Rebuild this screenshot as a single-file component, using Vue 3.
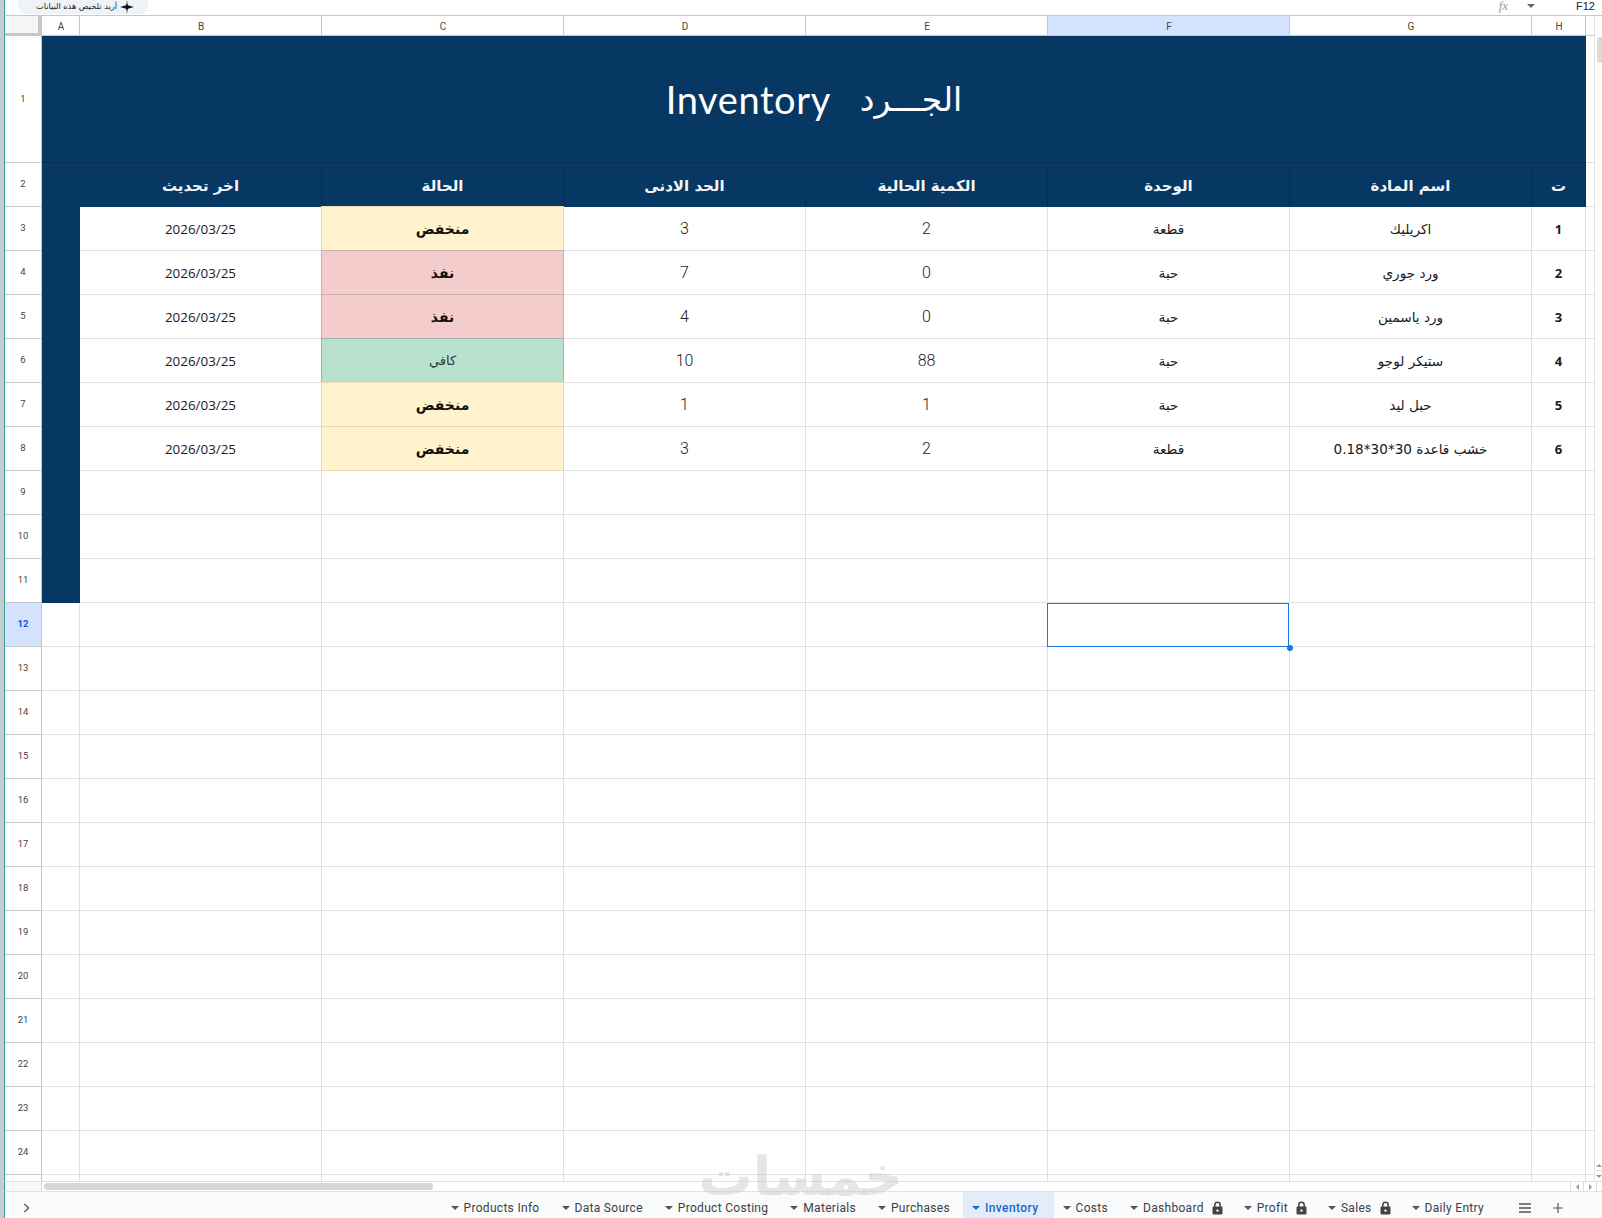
<script setup>
const colLetters = ['A', 'B', 'C', 'D', 'E', 'F', 'G', 'H']
const headers = ['اخر تحديث', 'الحالة', 'الحد الادنى', 'الكمية الحالية', 'الوحدة', 'اسم المادة', 'ت']
const items = [
  { date: '2026/03/25', status: 'منخفض', cls: 'low', min: 3, qty: 2, unit: 'قطعة', name: 'اكريليك', n: 1 },
  { date: '2026/03/25', status: 'نفذ', cls: 'out', min: 7, qty: 0, unit: 'حبة', name: 'ورد جوري', n: 2 },
  { date: '2026/03/25', status: 'نفذ', cls: 'out', min: 4, qty: 0, unit: 'حبة', name: 'ورد ياسمين', n: 3 },
  { date: '2026/03/25', status: 'كافي', cls: 'ok', min: 10, qty: 88, unit: 'حبة', name: 'ستيكر لوجو', n: 4 },
  { date: '2026/03/25', status: 'منخفض', cls: 'low', min: 1, qty: 1, unit: 'حبة', name: 'حبل ليد', n: 5 },
  { date: '2026/03/25', status: 'منخفض', cls: 'low', min: 3, qty: 2, unit: 'قطعة', name: 'خشب قاعدة 30*30*0.18', n: 6 }
]
const emptyRows = Array.from({ length: 16 }, (_, i) => i + 9)
const tabs = [
  { name: 'Products Info' },
  { name: 'Data Source' },
  { name: 'Product Costing' },
  { name: 'Materials' },
  { name: 'Purchases' },
  { name: 'Inventory', active: true },
  { name: 'Costs' },
  { name: 'Dashboard', lock: true },
  { name: 'Profit', lock: true },
  { name: 'Sales', lock: true },
  { name: 'Daily Entry' }
]
</script>

<template>
  <div class="page">
    <header class="topbar">
      <div class="pill">
        <span class="pill-text" dir="rtl">أريد تلخيص هذه البيانات</span>
        <svg class="sparkle" viewBox="0 0 20 20" width="14" height="14">
          <path d="M10 0 L10.7 6.2 L12.2 7.8 L20 10 L12.2 12.2 L10.7 13.8 L10 20 L9.3 13.8 L7.8 12.2 L0 10 L7.8 7.8 L9.3 6.2 Z" fill="#111" />
        </svg>
      </div>
      <div class="fx-area">
        <span class="fx">fx</span>
        <span class="fx-caret"></span>
        <span class="cell-name">F12</span>
      </div>
    </header>

    <div class="sheet">
      <div class="corner"></div>
      <div
        v-for="c in colLetters"
        :key="c"
        class="col-head"
        :class="{ selected: c === 'F' }"
      >{{ c }}</div>
      <div class="col-head blank"></div>

      <div class="row-head">1</div>
      <div class="title">
        <span class="title-en">Inventory</span>
        <span class="title-ar">الجـــرد</span>
      </div>
      <div class="cell edge"></div>

      <div class="row-head">2</div>
      <div class="head-cell fill"></div>
      <div v-for="h in headers" :key="h" class="head-cell" dir="rtl">{{ h }}</div>
      <div class="cell edge"></div>

      <template v-for="(it, i) in items" :key="it.n">
        <div class="row-head">{{ i + 3 }}</div>
        <div class="cell fill"></div>
        <div class="cell date">{{ it.date }}</div>
        <div class="cell status" :class="it.cls" dir="rtl">{{ it.status }}</div>
        <div class="cell num">{{ it.min }}</div>
        <div class="cell num">{{ it.qty }}</div>
        <div class="cell ar" dir="rtl">{{ it.unit }}</div>
        <div class="cell ar" dir="rtl">{{ it.name }}</div>
        <div class="cell idx">{{ it.n }}</div>
        <div class="cell edge"></div>
      </template>

      <template v-for="r in emptyRows" :key="r">
        <div class="row-head" :class="{ selected: r === 12 }">{{ r }}</div>
        <div class="cell" :class="{ fill: r < 12 }"></div>
        <div class="cell"></div>
        <div class="cell"></div>
        <div class="cell"></div>
        <div class="cell"></div>
        <div class="cell" :class="{ active: r === 12 }">
          <span v-if="r === 12" class="handle"></span>
        </div>
        <div class="cell"></div>
        <div class="cell"></div>
        <div class="cell edge"></div>
      </template>

      <div class="row-head stub"></div>
      <div v-for="c in 9" :key="c" class="cell stub-cell"></div>
    </div>

    <div class="hscroll">
      <div class="hscroll-left"></div>
      <div class="hscroll-track">
        <div class="hthumb"></div>
      </div>
      <div class="hbtn"><span class="tri-left"></span></div>
      <div class="hbtn"><span class="tri-right"></span></div>
      <div class="hscroll-end"></div>
    </div>

    <footer class="tabbar">
      <svg class="chevron" viewBox="0 0 8 12" width="7" height="10">
        <path d="M1.5 1 L6.5 6 L1.5 11" fill="none" stroke="#444" stroke-width="1.4" />
      </svg>
      <div class="tabs">
        <div v-for="t in tabs" :key="t.name" class="tab" :class="{ on: t.active, locked: t.lock }">
          <span class="caret"></span>
          <span class="tab-name">{{ t.name }}</span>
          <svg v-if="t.lock" class="lock" viewBox="0 0 11 14" width="11" height="14">
            <path d="M2.8 6 V4 a2.7 2.7 0 0 1 5.4 0 V6" fill="none" stroke="#444" stroke-width="1.5" />
            <rect x="0.5" y="5.6" width="10" height="8" rx="1" fill="#444" />
            <circle cx="5.5" cy="9.6" r="1.2" fill="#f9fbfd" />
          </svg>
        </div>
      </div>
      <div class="tools">
        <svg viewBox="0 0 12 10" width="12" height="10">
          <path d="M0 1 H12 M0 5 H12 M0 9 H12" stroke="#555" stroke-width="1.3" />
        </svg>
        <svg viewBox="0 0 10 10" width="10" height="10">
          <path d="M5 0 V10 M0 5 H10" stroke="#555" stroke-width="1.2" />
        </svg>
      </div>
    </footer>

    <div class="vscroll-thumb"></div>
    <div class="vbtns">
      <div class="vbtn"><span class="tri-up"></span></div>
      <div class="vbtn"><span class="tri-down"></span></div>
    </div>
    <div class="watermark" dir="rtl">خمسات</div>
  </div>
</template>

<style scoped>
.page {
  position: relative;
  width: 1602px;
  height: 1218px;
  overflow: hidden;
  box-sizing: border-box;
  border-left: 4px solid #c9cccc;
  display: flex;
  flex-direction: column;
  background: #fff;
  font-family: Roboto, "DejaVu Sans", sans-serif;
  color: #222;
}
.topbar {
  height: 16px;
  flex: none;
  display: flex;
  justify-content: space-between;
  border-left: 1px solid #3aa0a8;
  box-sizing: border-box;
  padding-left: 13px;
}
.pill {
  width: 130px;
  height: 15px;
  margin-top: -1px;
  box-sizing: border-box;
  padding: 0 20px 0 18px;
  border-radius: 0 0 9px 9px;
  background: #eff3f8;
  display: flex;
  align-items: center;
  justify-content: space-between;
  gap: 3px;
}
.pill-text {
  font: 8.2px "DejaVu Sans", sans-serif;
  white-space: nowrap;
  color: #222;
  margin-top: -1px;
}
.sparkle { flex: none; }
.fx-area {
  display: flex;
  align-items: center;
  padding-right: 7px;
  height: 12px;
}
.fx {
  font: italic 13px/12px "Liberation Serif", serif;
  color: #999;
  margin-right: 19px;
}
.fx-caret {
  width: 0;
  height: 0;
  border-left: 4px solid transparent;
  border-right: 4px solid transparent;
  border-top: 4px solid #666;
  margin-right: 41px;
}
.cell-name {
  font: 11px/12px "Liberation Sans", sans-serif;
  color: #222;
}
.sheet {
  flex: none;
  display: grid;
  grid-template-columns: 37px 38px repeat(6, 242px) 54px 9px;
  grid-template-rows: 20px 127px repeat(23, 44px) 6px;
  border-left: 1px solid #3aa0a8;
  border-top: 1px solid #c7c7c7;
  margin-top: -1px;
}
.corner {
  background: #f5f5f5;
  border-right: 4px solid #c7c7c7;
  border-bottom: 3px solid #c7c7c7;
}
.col-head {
  box-sizing: border-box;
  display: flex;
  align-items: center;
  justify-content: center;
  padding: 1px 0 0 1px;
  font: 10px Roboto, sans-serif;
  color: #444;
  border-right: 1px solid #c7c7c7;
  border-bottom: 1px solid #c7c7c7;
}
.col-head.selected { background: #d3e3fd; }
.col-head.blank { border-right: 1px solid #e1e1e1; }
.row-head {
  box-sizing: border-box;
  display: flex;
  align-items: center;
  justify-content: center;
  padding-bottom: 2px;
  font: 9.5px Roboto, sans-serif;
  color: #444;
  border-right: 1px solid #c7c7c7;
  border-bottom: 1px solid #c7c7c7;
}
.row-head.selected {
  background: #d3e3fd;
  font-weight: 700;
  color: #0b57d0;
}
.row-head.stub { border-bottom: 0; }
.title {
  grid-column: span 8;
  background: #073763;
  color: #fff;
  display: flex;
  align-items: center;
  justify-content: center;
  gap: 29px;
  border-bottom: 1px solid #06304f;
  box-sizing: border-box;
}
.title-en {
  font: 400 38px Lato, sans-serif;
  letter-spacing: .6px;
}
.title-ar {
  font: 400 33px "DejaVu Sans", sans-serif;
}
.head-cell {
  box-sizing: border-box;
  background: #073763;
  color: #f2f5f8;
  display: flex;
  align-items: center;
  justify-content: center;
  padding-top: 1px;
  font: 700 15px "DejaVu Sans", sans-serif;
  border-right: 1px solid #06304f;
}
.cell {
  box-sizing: border-box;
  display: flex;
  align-items: center;
  justify-content: center;
  min-width: 0;
  border-right: 1px solid #e1e1e1;
  border-bottom: 1px solid #e1e1e1;
  position: relative;
  color: #1a1a1a;
}
.cell.fill { background: #073763; border-color: #073763; }
.head-cell.fill { border-color: #073763; }
.cell.edge { border-right-color: #e1e1e1; }
.cell.stub-cell { border-bottom: 0; }
.date { font: 13.4px "Open Sans", sans-serif; }
.num { font: 300 16px Roboto, sans-serif; color: #222; }
.ar { font: 13.6px "DejaVu Sans", sans-serif; }
.idx { font: 700 13px "Open Sans", sans-serif; }
.status {
  font: 700 14px "DejaVu Sans", sans-serif;
  color: #111;
  margin: -1px 0 0 -1px;
  border: 1px solid;
}
.status.low { background: #fff2cc; border-color: #e8dbb4; }
.status.out { background: #f4cccc; border-color: #ceadad; }
.status.ok {
  background: #b7e1cd;
  border-color: #9cb8aa;
  font-weight: 400;
  font-size: 13px;
  color: #2c3e38;
}
.cell.active {
  border: 0;
  outline: 1.5px solid #1a73e8;
  outline-offset: -1.5px;
  margin: 0 1px 0 -1px;
  z-index: 2;
  overflow: visible;
}
.handle {
  position: absolute;
  right: -4px;
  bottom: -4px;
  width: 6px;
  height: 6px;
  border-radius: 50%;
  background: #1a73e8;
}
.hscroll {
  flex: none;
  height: 10px;
  display: flex;
  border-top: 1px solid #e1e1e1;
  box-sizing: border-box;
  border-left: 1px solid #3aa0a8;
}
.hscroll-left {
  width: 36px;
  flex: none;
  background: #f8f8f8;
  border-right: 1px solid #d5d5d5;
}
.hscroll-track {
  flex: 1;
  padding: 1px 0 0 2px;
}
.hthumb {
  width: 389px;
  height: 7px;
  border-radius: 4px;
  background: #d6d6d6;
}
.hbtn {
  flex: none;
  width: 12px;
  display: flex;
  align-items: center;
  justify-content: center;
  border-left: 1px solid #ddd;
}
.hscroll-end {
  flex: none;
  width: 5px;
  border-left: 1px solid #ddd;
}
.tri-left, .tri-right, .tri-up, .tri-down {
  width: 0;
  height: 0;
  display: block;
}
.tri-left {
  border-top: 3px solid transparent;
  border-bottom: 3px solid transparent;
  border-right: 3px solid #999;
}
.tri-right {
  border-top: 3px solid transparent;
  border-bottom: 3px solid transparent;
  border-left: 3px solid #999;
}
.tri-up {
  border-left: 3px solid transparent;
  border-right: 3px solid transparent;
  border-bottom: 3px solid #999;
}
.tri-down {
  border-left: 3px solid transparent;
  border-right: 3px solid transparent;
  border-top: 3px solid #999;
}
.tabbar {
  flex: 1;
  min-height: 0;
  display: flex;
  align-items: center;
  background: #f9fbfd;
  border-top: 1px solid #e1e3e1;
  border-left: 1px solid #3aa0a8;
  box-sizing: border-box;
  padding-left: 18px;
}
.chevron { flex: none; margin-top: 6px; }
.tabs {
  display: flex;
  height: 100%;
  margin-left: auto;
}
.tab {
  display: flex;
  align-items: center;
  padding: 6px 13px 0 9px;
  gap: 5px;
  font: 12px Roboto, sans-serif;
  letter-spacing: .3px;
  color: #3c4043;
}
.tab.locked { padding-right: 12px; }
.tab.on {
  background: #e3edfa;
  color: #1a66c9;
  font-weight: 500;
  letter-spacing: .4px;
  padding-right: 15px;
}
.caret {
  flex: none;
  width: 0;
  height: 0;
  border-left: 4px solid transparent;
  border-right: 4px solid transparent;
  border-top: 4px solid #555;
}
.tab.on .caret { border-top-color: #1a66c9; }
.lock { flex: none; margin-left: 3px; }
.tools {
  display: flex;
  align-items: center;
  gap: 22px;
  padding: 5px 39px 0 22px;
}
.vscroll-thumb {
  position: absolute;
  right: 0;
  top: 37px;
  width: 5px;
  height: 26px;
  border-radius: 3px 0 0 3px;
  background: #dcdcdc;
}
.vbtns {
  position: absolute;
  right: 0;
  top: 1160px;
  width: 6px;
}
.vbtn {
  height: 10px;
  display: flex;
  align-items: center;
  justify-content: center;
  border-bottom: 1px solid #ddd;
}
.watermark {
  position: absolute;
  left: 699px;
  top: 1157px;
  width: 200px;
  height: 40px;
  text-align: center;
  font: 700 54px/40px "DejaVu Sans", sans-serif;
  color: rgba(200, 200, 200, .45);
  pointer-events: none;
}
</style>

<style>
html, body { margin: 0; padding: 0; background: #fff; }
</style>
